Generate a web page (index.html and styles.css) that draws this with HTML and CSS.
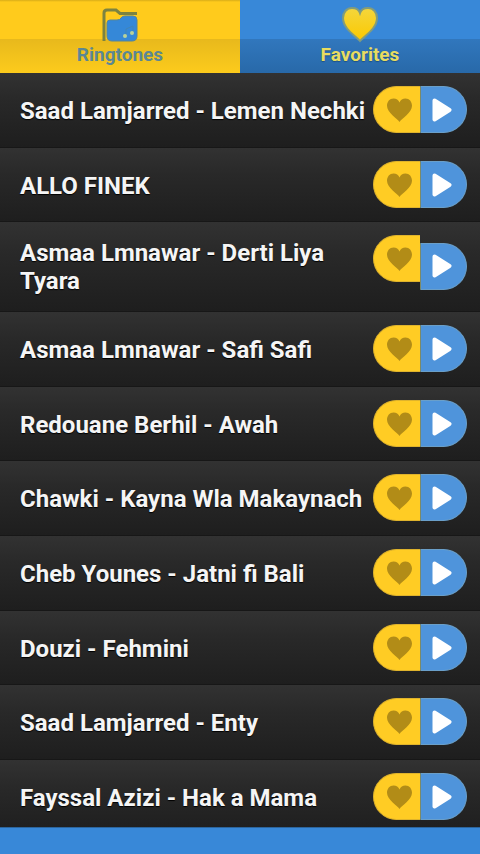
FILE: index.html
```
<!DOCTYPE html>
<html lang="en">
<head>
<meta charset="utf-8">
<meta name="viewport" content="width=device-width, initial-scale=1">
<title>Ringtones</title>
<link rel="stylesheet" href="styles.css">
</head>
<body>
<svg class="defs" aria-hidden="true">
  <defs>
    <symbol id="heart" viewBox="0 0 24 23"><path d="M12 23C10 20 0 14 0 7.500C0 3.500 2.500 0.500 6.300 0.500C9 0.500 11 2 12 4.300C13 2 15 0.500 17.700 0.500C21.500 0.500 24 3.500 24 7.500C24 14 14 20 12 23Z"/></symbol>
    <symbol id="play" viewBox="0 0 20 24"><path d="M2.500 2.500L17.500 12L2.500 21.500Z" stroke-width="4" stroke-linejoin="round"/></symbol>
    <linearGradient id="gold" x1="0" y1="0" x2="0" y2="1"><stop offset="0" stop-color="#f4d63c"/><stop offset="1" stop-color="#fbc900"/></linearGradient>
  </defs>
</svg>
<nav class="tabs">
  <button class="tab tab-active" type="button">
    <svg class="tab-icon" viewBox="0 0 36 36" aria-hidden="true">
      <path d="M2 34V6Q2 3 5 3H14L18 6.500H35" fill="none" stroke="#7c8340" stroke-width="3"/>
      <path d="M5 16Q5 13 8 13H15Q18 13 19 11Q20 9 23 9H31Q35 9 35 13V29Q35 34 30 34H10Q5 34 5 29Z" fill="#3588d8" stroke="#55859a" stroke-width="1"/>
      <path d="M24 29V22L31 19V26" fill="none" stroke="#4185b8" stroke-width="1"/>
      <circle cx="23" cy="29" r="2" fill="#b9d29a"/>
      <circle cx="30" cy="26" r="2" fill="#b9d29a"/>
    </svg>
    <span>Ringtones</span>
  </button>
  <button class="tab" type="button">
    <svg class="tab-icon" viewBox="0 0 36 36" aria-hidden="true">
      <path d="M18 34C14 29 1 22 1 11C1 5 5 1 10 1C14 1 17 3 18 6C19 3 22 1 26 1C31 1 35 5 35 11C35 22 22 29 18 34Z" fill="url(#gold)" stroke="#829c7c" stroke-width="2"/>
    </svg>
    <span>Favorites</span>
  </button>
</nav>
<main>
  <ul class="list" id="list"></ul>
</main>
<footer class="footer"></footer>
<script src="app.js"></script>
</body>
</html>
```
FILE: app.js
```
const songs = [
  "Saad Lamjarred - Lemen Nechki",
  "ALLO FINEK",
  "Asmaa Lmnawar - Derti Liya Tyara",
  "Asmaa Lmnawar - Safi Safi",
  "Redouane Berhil - Awah",
  "Chawki - Kayna Wla Makaynach",
  "Cheb Younes - Jatni fi Bali",
  "Douzi - Fehmini",
  "Saad Lamjarred - Enty",
  "Fayssal Azizi - Hak a Mama"
];

document.getElementById("list").innerHTML = songs.map((song) => `
  <li class="row">
    <span class="title">${song}</span>
    <button class="action favorite" type="button" aria-label="Favorite">
      <svg class="heart" aria-hidden="true"><use href="#heart"/></svg>
    </button>
    <button class="action play" type="button" aria-label="Play">
      <svg class="triangle" aria-hidden="true"><use href="#play"/></svg>
    </button>
  </li>`).join("");
```
FILE: styles.css
```
* {
  box-sizing: border-box;
}

body {
  margin: 0;
  height: 100vh;
  display: flex;
  flex-direction: column;
  overflow: hidden;
  background: #3888d8;
  font-family: Roboto, "Liberation Sans", sans-serif;
}

button {
  margin: 0;
  padding: 0;
  border: 0;
  font: inherit;
}

.defs {
  position: absolute;
  width: 0;
  height: 0;
}

.tabs {
  display: grid;
  grid-template-columns: 1fr 1fr;
  flex: none;
}

.tab {
  display: flex;
  flex-direction: column;
  align-items: center;
  padding: 7px 0 6px;
  background: linear-gradient(#3888d8 39px, #3177bd 39px, #2869a9);
  color: #e8dc60;
  font-size: 19px;
  font-weight: 700;
  line-height: 24px;
  text-shadow: 0 1px 1px #1c5188;
}

.tab-active {
  background: linear-gradient(#d9ad18 0, #ffcb1c 2px, #ffcb1c 39px, #e8b91c 39px, #fccb1c);
  box-shadow: 1px 0 0 #6d8a68;
  color: #5b8794;
  text-shadow: none;
}

.tab-icon {
  width: 36px;
  height: 36px;
}

main {
  flex: 1;
  min-height: 0;
  overflow: hidden;
}

.list {
  margin: 0;
  padding: 0;
  list-style: none;
}

.row {
  display: flex;
  align-items: center;
  padding: 13px 13px 14px 20px;
  border-bottom: 1px solid #171717;
  background: linear-gradient(#323232, #292929 35%, #1e1e1e);
}

.row:nth-child(3n + 2) {
  padding-bottom: 13px;
}

.title {
  flex: 1;
  min-width: 0;
  padding: 4px 0 2px;
  color: #f5f5f5;
  font-size: 24px;
  font-weight: 700;
  line-height: 28px;
  text-shadow: 0 1px 1px #000;
}

.action {
  display: grid;
  place-items: center;
  flex: none;
  width: 47px;
  height: 47px;
}

.favorite {
  align-self: flex-start;
  border: 1px solid #dfb32c;
  border-right: 0;
  border-radius: 24px 0 0 24px;
  background: #ffcc24;
}

.play {
  border: 1px solid #6a9fc9;
  border-left: 1px solid #7c8a68;
  border-radius: 0 24px 24px 0;
  background: #4f94db;
}

.heart {
  width: 25px;
  height: 24px;
  margin-left: 4px;
  fill: #b28c17;
}

.triangle {
  width: 20px;
  height: 24px;
  margin-right: 4px;
  fill: #fff;
  stroke: #fff;
}

.footer {
  flex: none;
  height: 27px;
  border-top: 1px solid #2c659d;
  background: #3888d8;
}
```
